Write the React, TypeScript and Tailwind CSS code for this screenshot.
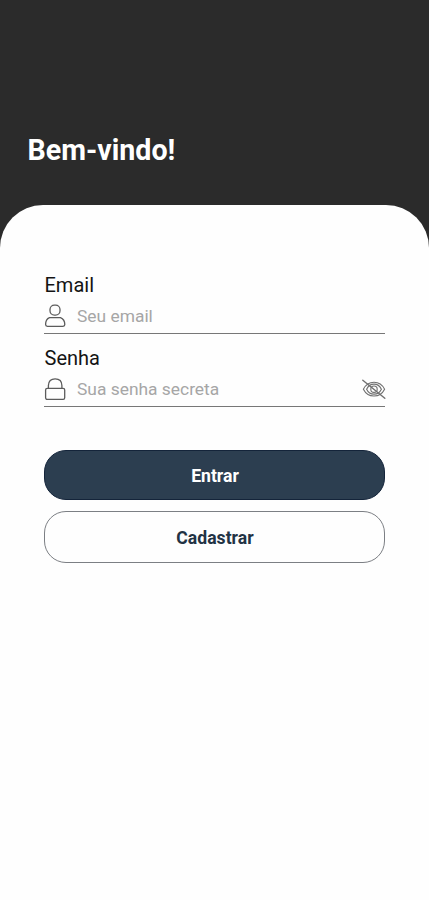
import type { ReactNode } from "react";

function UserIcon() {
  return (
    <svg className="h-6 w-[22px] shrink-0" viewBox="0 0 22 24" fill="none" stroke="#5c5c5c" strokeWidth="1.3">
      <rect x="6" y="1.2" width="10" height="10" rx="4.4" />
      <path d="M5.5 13.6H16.5C19 14.6 20.8 17.5 20.8 20.6Q20.8 22.4 19 22.4H3.4Q1.6 22.4 1.6 20.6C1.6 17.5 3 14.6 5.5 13.6Z" />
    </svg>
  );
}

function LockIcon() {
  return (
    <svg className="h-6 w-[22px] shrink-0" viewBox="0 0 22 24" fill="none" stroke="#5c5c5c" strokeWidth="1.3">
      <path d="M4.4 11V8.6C4.4 4.2 7 1.8 11.1 1.8S17.9 4.2 17.9 8.6V11" />
      <rect x="1.6" y="11.4" width="19.1" height="11" rx="1.6" />
    </svg>
  );
}

function EyeOffIcon() {
  return (
    <svg className="-mr-px h-6 w-6 shrink-0" viewBox="0 0 24 24" fill="none" stroke="#707070" strokeWidth="1.1" strokeLinecap="round">
      <path d="M1.4 12.2C3.6 7.8 7.5 5.2 12 5.2S20.4 7.8 22.6 12.2C20.4 16.6 16.5 19 12 19S3.6 16.6 1.4 12.2Z" />
      <path d="M4.6 12.2C6.1 9 8.8 7.1 12 7.1S17.9 9 19.4 12.2C17.9 15.4 15.2 17.1 12 17.1S6.1 15.4 4.6 12.2Z" />
      <circle cx="12" cy="12.2" r="3.2" />
      <path d="M0.8 3.2L22.8 21.2" strokeWidth="1.4" />
    </svg>
  );
}

type FieldProps = { label: string; type: string; placeholder: string; icon: ReactNode; trailing?: ReactNode };

function Field({ label, type, placeholder, icon, trailing }: FieldProps) {
  return (
    <label className="flex flex-col">
      <span className="pl-[0.5px] text-[20px] leading-6 text-[#141414]">{label}</span>
      <span className="mt-[3px] flex h-[34px] items-start border-b border-[#777777] pt-[4px]">
        {icon}
        <input
          type={type}
          placeholder={placeholder}
          className="ml-[11px] h-6 min-w-0 flex-1 bg-transparent text-[17.4px] leading-6 text-gray-900 outline-none placeholder:text-[#a6a6a6]"
        />
        {trailing}
      </span>
    </label>
  );
}

export default function App() {
  return (
    <main className="flex h-[900px] w-full flex-col bg-[#2b2b2b] font-[Roboto,sans-serif]">
      <header className="h-[205px] shrink-0 pt-[132px] pl-[27.5px]">
        <h1 className="text-[28.6px] leading-9 font-bold text-white">Bem-vindo!</h1>
      </header>
      <form className="flex flex-1 flex-col rounded-t-[43px] bg-[#fefefe] px-11 pt-[68px]">
        <div className="flex flex-col gap-3">
          <Field label="Email" type="email" placeholder="Seu email" icon={<UserIcon />} />
          <Field label="Senha" type="password" placeholder="Sua senha secreta" icon={<LockIcon />} trailing={<EyeOffIcon />} />
        </div>
        <div className="mt-[43px] flex flex-col gap-[11px]">
          <button type="button" className="h-[50px] rounded-[22px] border border-[#14243a] bg-[#2c3e50] pt-[3px] pl-px text-[17.6px] font-bold text-white">
            Entrar
          </button>
          <button type="button" className="h-[52px] rounded-[22px] border border-[#7c7f84] pt-[2px] pl-px text-[17.6px] font-bold text-[#223344]">
            Cadastrar
          </button>
        </div>
      </form>
    </main>
  );
}
